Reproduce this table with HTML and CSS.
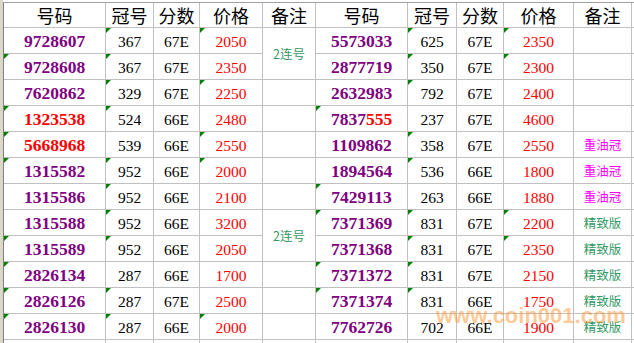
FILE: index.html
```html
<!DOCTYPE html>
<html lang="zh">
<head>
<meta charset="utf-8">
<title>号码价格表</title>
<link rel="stylesheet" href="styles.css">
</head>
<body>
<div class="sheet">
  <div class="rowhead"></div>
  <div class="grid">
    <div class="c h">号码</div><div class="c h">冠号</div><div class="c h">分数</div><div class="c h">价格</div><div class="c h">备注</div>
    <div class="c h">号码</div><div class="c h">冠号</div><div class="c h">分数</div><div class="c h">价格</div><div class="c h">备注</div><div class="c e"></div>

    <div class="c n">9728607</div><div class="c t">367</div><div class="c">67E</div><div class="c p t">2050</div><div class="c note g span2">2连号</div>
    <div class="c n">5573033</div><div class="c t">625</div><div class="c">67E</div><div class="c p t">2350</div><div class="c note"></div><div class="c e"></div>

    <div class="c n t">9728608</div><div class="c t">367</div><div class="c">67E</div><div class="c p">2350</div>
    <div class="c n">2877719</div><div class="c t">350</div><div class="c">67E</div><div class="c p t">2300</div><div class="c note"></div><div class="c e"></div>

    <div class="c n">7620862</div><div class="c t">329</div><div class="c">67E</div><div class="c p t">2250</div><div class="c note"></div>
    <div class="c n">2632983</div><div class="c t">792</div><div class="c">67E</div><div class="c p">2400</div><div class="c note"></div><div class="c e"></div>

    <div class="c n red t">1323538</div><div class="c t">524</div><div class="c">66E</div><div class="c p">2480</div><div class="c note"></div>
    <div class="c n t">7837<span class="red">555</span></div><div class="c">237</div><div class="c">67E</div><div class="c p">4600</div><div class="c note"></div><div class="c e"></div>

    <div class="c n red t">5668968</div><div class="c">539</div><div class="c">66E</div><div class="c p t">2550</div><div class="c note"></div>
    <div class="c n">1109862</div><div class="c t">358</div><div class="c">67E</div><div class="c p">2550</div><div class="c note m">重油冠</div><div class="c e"></div>

    <div class="c n t">1315582</div><div class="c t">952</div><div class="c">66E</div><div class="c p t">2000</div><div class="c note"></div>
    <div class="c n">1894564</div><div class="c t">536</div><div class="c">66E</div><div class="c p">1800</div><div class="c note m">重油冠</div><div class="c e"></div>

    <div class="c n">1315586</div><div class="c t">952</div><div class="c">66E</div><div class="c p">2100</div><div class="c note"></div>
    <div class="c n t">7429113</div><div class="c">263</div><div class="c">66E</div><div class="c p">1880</div><div class="c note m">重油冠</div><div class="c e"></div>

    <div class="c n">1315588</div><div class="c t">952</div><div class="c">66E</div><div class="c p">3200</div><div class="c note g span2">2连号</div>
    <div class="c n t">7371369</div><div class="c t">831</div><div class="c">67E</div><div class="c p t">2200</div><div class="c note g">精致版</div><div class="c e"></div>

    <div class="c n t">1315589</div><div class="c t">952</div><div class="c">66E</div><div class="c p">2050</div>
    <div class="c n">7371368</div><div class="c t">831</div><div class="c">67E</div><div class="c p t">2350</div><div class="c note g">精致版</div><div class="c e"></div>

    <div class="c n t">2826134</div><div class="c">287</div><div class="c">66E</div><div class="c p">1700</div><div class="c note"></div>
    <div class="c n t">7371372</div><div class="c t">831</div><div class="c">67E</div><div class="c p">2150</div><div class="c note g">精致版</div><div class="c e"></div>

    <div class="c n t">2826126</div><div class="c t">287</div><div class="c">67E</div><div class="c p">2500</div><div class="c note"></div>
    <div class="c n t">7371374</div><div class="c t">831</div><div class="c">66E</div><div class="c p">1750</div><div class="c note g">精致版</div><div class="c e"></div>

    <div class="c n t">2826130</div><div class="c t">287</div><div class="c">66E</div><div class="c p t">2000</div><div class="c note"></div>
    <div class="c n">7762726</div><div class="c">702</div><div class="c">66E</div><div class="c p">1900</div><div class="c note g">精致版</div><div class="c e"></div>

    <div class="c e"></div><div class="c e"></div><div class="c e"></div><div class="c e"></div><div class="c e"></div>
    <div class="c e"></div><div class="c e"></div><div class="c e"></div><div class="c e"></div><div class="c e"></div><div class="c e"></div>
  </div>
</div>
<div class="wm">www.coin001.com</div>
</body>
</html>
```
FILE: styles.css
```css
html, body {
  margin: 0;
  padding: 0;
  background: #fff;
  overflow: hidden;
}

.sheet {
  display: flex;
  align-items: flex-start;
}

.rowhead {
  flex: none;
  width: 3px;
  height: 343px;
  background: #dcd8c8;
}

.grid {
  display: grid;
  grid-template-columns: 101px 47px 45px 62px 52px 91px 48px 46px 69px 57px 20px;
  grid-template-rows: 24px repeat(12, 25px) 20px;
  gap: 1px;
  background: #c0c0c0;
  margin-top: 2px;
  border-top: 1px solid #a0a0a0;
  border-left: 1px solid #808080;
}

.c {
  position: relative;
  box-sizing: border-box;
  background: #fff;
  display: flex;
  align-items: center;
  justify-content: center;
  padding-top: 2px;
  font-family: "Liberation Serif", serif;
  font-size: 15.5px;
  color: #000;
  white-space: nowrap;
}

.h {
  padding-top: 0;
  font-family: "Noto Sans CJK SC", sans-serif;
  font-size: 18px;
  color: #000;
}

.n {
  font-weight: bold;
  font-size: 17.5px;
  color: #800080;
}

.red {
  color: #ff0000;
}

.p {
  color: #ff0000;
}

.note {
  padding-top: 0;
  font-family: "Noto Sans CJK SC", sans-serif;
  font-size: 12.5px;
}

.g {
  color: #339966;
}

.m {
  color: #ff00ff;
}

.span2 {
  grid-row: span 2;
}

.t::before {
  content: "";
  position: absolute;
  left: 0;
  top: 0;
  border-top: 5px solid #008000;
  border-right: 5px solid transparent;
}

.wm {
  position: absolute;
  left: 436px;
  top: 305px;
  font-family: "Liberation Sans", sans-serif;
  font-weight: bold;
  font-size: 22px;
  line-height: 22px;
  color: rgba(255, 150, 50, 0.5);
  pointer-events: none;
}
```
